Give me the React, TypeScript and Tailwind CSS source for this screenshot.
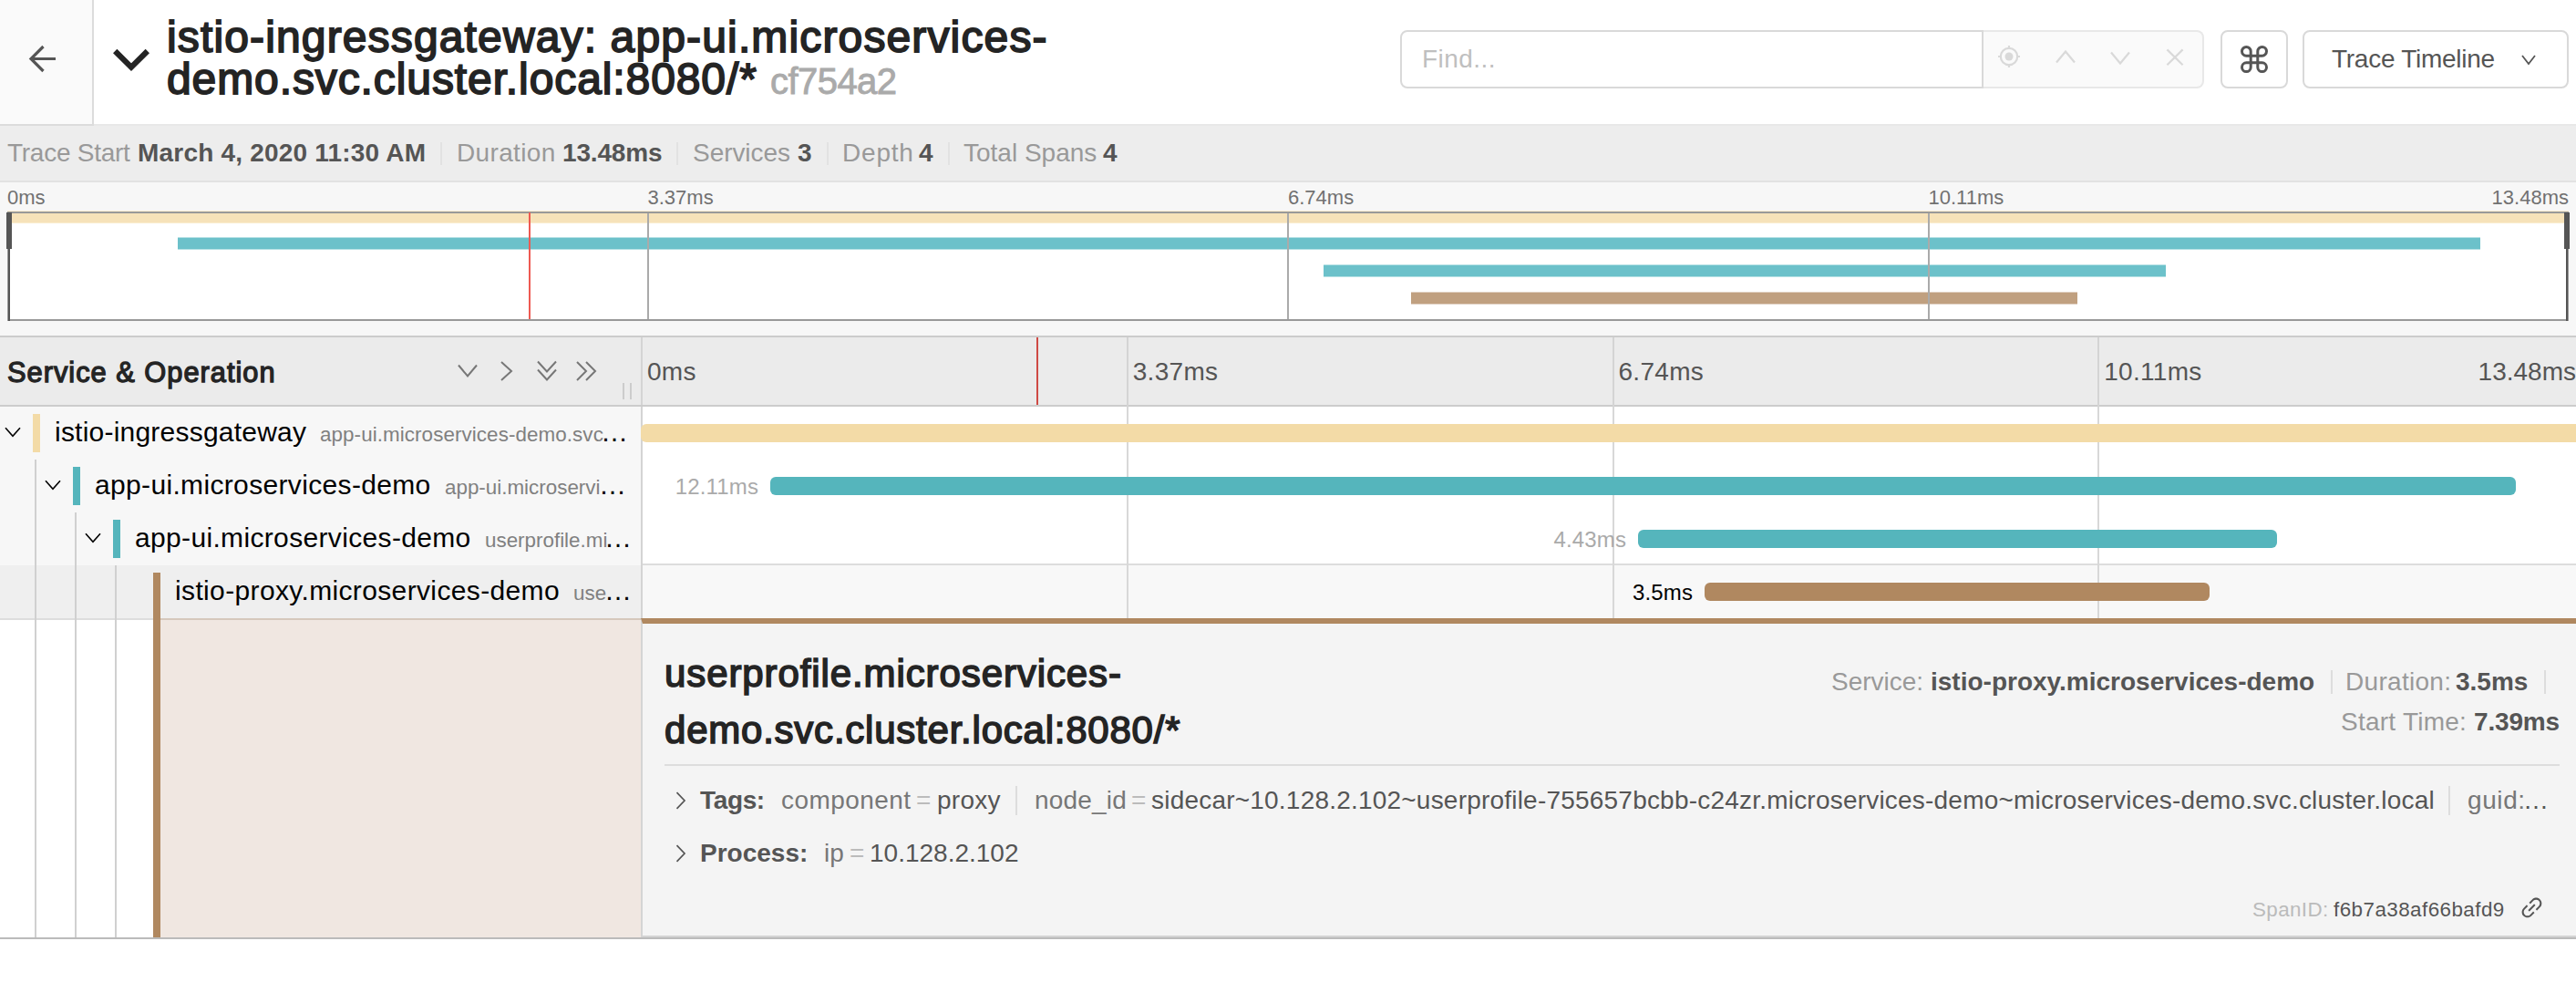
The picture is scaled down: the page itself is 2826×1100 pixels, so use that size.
import type { ReactNode } from "react";
import { AiOutlineLink } from "react-icons/ai";

const GRID = [25, 50, 75];
const TICKS = ["0ms", "3.37ms", "6.74ms", "10.11ms"];

function Stroke({ w, h, d, sw = 2, className = "" }: { w: number; h: number; d: string; sw?: number; className?: string }) {
  return (
    <svg width={w} height={h} viewBox={`0 0 ${w} ${h}`} fill="none" stroke="currentColor" strokeWidth={sw} className={`block shrink-0 ${className}`}>
      <path d={d} />
    </svg>
  );
}

function T({ className = "", children }: { className?: string; children: ReactNode }) {
  return <span className={`block shrink-0 whitespace-nowrap ${className}`}>{children}</span>;
}

function Header() {
  return (
    <header className="flex h-[138px] w-full">
      <div className="flex w-[103px] shrink-0 border-r-2 border-b-2 border-[#dcdcdc] bg-[#fafafa] pt-[49px] pl-[31px] text-[#555]">
        <Stroke w={31} h={31} sw={3.2} d="M30 15.5H3M16.5 2L3 15.5L16.5 29" />
      </div>
      <div className="flex flex-1 border-b-2 border-[#e8e8e8]">
        <Stroke w={40} h={26} sw={6.2} className="mt-[53px] ml-[21px] text-[#242424]" d="M2.2 3L20 20.6L37.8 3" />
        <h1 className="mt-[18px] ml-[19px] w-[1000px] text-[48px] leading-[46px] text-[#242424] [-webkit-text-stroke:1.8px_#242424]">
          <T className="tracking-[1.14px]">istio-ingressgateway: app-ui.microservices-</T>
          <span className="flex items-baseline">
            <T className="w-[662px] tracking-[0.9px]">demo.svc.cluster.local:8080/*</T>
            <T className="text-[40px] tracking-[-0.55px] text-[#aaa] [-webkit-text-stroke:0.9px_#aaa]">cf754a2</T>
          </span>
        </h1>
        <div className="mt-[33px] ml-auto flex h-16 pr-2">
          <div className="flex w-[640px] items-center rounded-l-lg border-2 border-[#d9d9d9] pl-[22px]">
            <T className="text-[28px] tracking-[0.45px] text-[#bfbfbf]">Find...</T>
          </div>
          <div className="flex w-[242px] items-start rounded-r-lg border-2 border-l-0 border-[#e8e8e8] bg-[#fafafa] text-[#d9d9d9]">
            <svg width="26" height="26" viewBox="0 0 26 26" className="mt-[14px] ml-[15px] block" fill="none" stroke="currentColor" strokeWidth="2.2">
              <circle cx="13" cy="13" r="9.2" />
              <circle cx="13" cy="13" r="4.5" fill="currentColor" stroke="none" />
              <path d="M13 1v3M13 22v3M1 13h3M22 13h3" />
            </svg>
            <Stroke w={22} h={16} sw={2.2} className="mt-[19px] ml-[38px]" d="M1 14.5L11 2.5L21 14.5" />
            <Stroke w={22} h={16} sw={2.2} className="mt-[21px] ml-[38px]" d="M1 1.5L11 13.5L21 1.5" />
            <Stroke w={20} h={20} sw={2.2} className="mt-[18px] ml-[39px]" d="M1.4 1.4L18.6 18.2M18.6 1.4L1.4 18.2" />
          </div>
          <div className="ml-[18px] w-[74px] rounded-lg border-2 border-[#d9d9d9] pt-[15px] pl-5 text-[#555]">
            <Stroke w={30} h={30} sw={3} d="M18.8 6.35v17.3a4.85 4.85 0 1 0 4.85-4.85H6.35a4.85 4.85 0 1 0 4.85 4.85V6.35a4.85 4.85 0 1 0-4.85 4.85h17.3a4.85 4.85 0 1 0-4.85-4.85" />
          </div>
          <div className="ml-4 flex w-[292px] items-center rounded-lg border-2 border-[#d9d9d9] pl-[30px] text-[#555]">
            <T className="w-[208px] text-[28px] tracking-[-0.27px]">Trace Timeline</T>
            <Stroke w={16} h={12} sw={1.8} className="mt-px" d="M1 1L8 10L15 1" />
          </div>
        </div>
      </div>
    </header>
  );
}

function Divider() {
  return <div className="h-[25px] w-[2px] shrink-0 bg-[#e2e2e2]" />;
}

function Summary() {
  return (
    <div className="flex h-[62px] items-center border-b-2 border-[#e2e2e2] bg-[#ededed] pl-2 text-[28px] leading-[60px] text-[#999]">
      <T className="w-[143px] tracking-[-0.26px]">Trace Start</T>
      <T className="w-[332px] font-bold tracking-[0.2px] text-[#555]">March 4, 2020 11:30 AM</T>
      <Divider />
      <T className="ml-4 w-[116px] tracking-[0.35px]">Duration</T>
      <T className="w-[125px] font-bold tracking-[-0.16px] text-[#555]">13.48ms</T>
      <Divider />
      <T className="ml-4 w-[115px] tracking-[-0.05px]">Services</T>
      <T className="w-[32px] font-bold text-[#555]">3</T>
      <Divider />
      <T className="ml-[15px] w-[84px] tracking-[0.8px]">Depth</T>
      <T className="w-[32px] font-bold text-[#555]">4</T>
      <Divider />
      <T className="ml-[15px] w-[153px]">Total Spans</T>
      <T className="font-bold text-[#555]">4</T>
    </div>
  );
}

const MINI = [
  { left: 0, right: 100, top: "top-[-3px]", color: "bg-[#f6e2b9] border-[#faedd0]" },
  { left: 6.655, right: 96.55, top: "top-[26px]", color: "bg-[#6cc1ca] border-[#b4e0e4]" },
  { left: 51.39, right: 84.27, top: "top-[56px]", color: "bg-[#6cc1ca] border-[#b4e0e4]" },
  { left: 54.8, right: 80.82, top: "top-[86px]", color: "bg-[#c0a080] border-[#dfcfbf]" },
];

function Minimap() {
  return (
    <div className="h-[170px] border-b-2 border-[#ccc] bg-[#f7f7f7] px-2">
      <div className="grid h-8 grid-cols-4 text-[22px] leading-[33px] text-[#717171]">
        <T>0ms</T>
        <T>3.37ms</T>
        <T>6.74ms</T>
        <span className="flex justify-between">
          <T>10.11ms</T>
          <T>13.48ms</T>
        </span>
      </div>
      <div className="relative h-[120px] border-y-2 border-[#999] bg-white">
        {MINI.map((b, i) => (
          <div key={i} className={`absolute h-[14px] border-y ${b.top} ${b.color}`} style={{ left: `${b.left}%`, width: `${b.right - b.left}%` }} />
        ))}
        <div className="absolute inset-x-0 -top-[2px] h-[2px] bg-[#999]" />
        {GRID.map((g) => (
          <div key={g} className="absolute inset-y-0 -ml-px w-[2px] bg-[#aaa]" style={{ left: `${g}%` }} />
        ))}
        <div className="absolute top-0 -bottom-[2px] left-0 w-[3px] border-l border-[#999] bg-[#555]" />
        <div className="absolute top-0 -bottom-[2px] right-0 w-[3px] border-r border-[#999] bg-[#555]" />
        <div className="absolute -top-px -left-px h-10 w-[6px] bg-[#555]" />
        <div className="absolute -top-px -right-px h-10 w-[6px] bg-[#555]" />
        <div className="absolute -top-px bottom-0 left-[572px] w-[2px] bg-[#ee5a52]" />
      </div>
    </div>
  );
}

function TimelineHeader() {
  return (
    <div className="flex h-[76px] border-b-2 border-[#ccc] bg-[#ebebeb]">
      <div className="relative flex w-[705px] shrink-0 items-center border-r-2 border-[#d4d4d4] pl-2 text-[#777]">
        <T className="w-[494px] pt-[4px] text-[30.8px] leading-[72px] tracking-[1px] text-[#242424] [-webkit-text-stroke:1.3px_#242424]">Service &amp; Operation</T>
        <Stroke w={22} h={16} className="-mt-px" d="M1 1.5L11 13.5L21 1.5" />
        <Stroke w={16} h={22} className="ml-6" d="M2 1L13 11L2 21" />
        <Stroke w={22} h={24} className="ml-[25px]" d="M1 1.5L11 12.5L21 1.5M1 10.5L11 21.5L21 10.5" />
        <Stroke w={24} h={22} className="ml-5" d="M2 1L12 11L2 21M12 1L22 11L12 21" />
        <div className="absolute right-[10px] bottom-[6px] h-[18px] w-[10px] border-x-2 border-[#ccc]" />
      </div>
      <div className="relative -ml-[2px] grid w-[2131px] shrink-0 grid-cols-4 text-[28px] leading-[76px] text-[#555]">
        {TICKS.map((t, i) => (
          <div key={t} className={`flex justify-between pr-2 ${i === 0 ? "pl-[7px]" : "border-l-2 border-[#d4d4d4] pl-[5px]"}`}>
            <T className="tracking-[0.3px]">{t}</T>
            {i === 3 && <T>13.48ms</T>}
          </div>
        ))}
        <div className="absolute inset-y-0 left-[434px] w-[2px] bg-[#cf4a44]" />
      </div>
    </div>
  );
}

type Row = {
  name: string; op: string; label?: string; left: number; right: number;
  color: string; lines: number; nameBox: string; opBox: string; selected?: boolean;
};

const ROWS: Row[] = [
  { name: "istio-ingressgateway", op: "app-ui.microservices-demo.svc", left: 0, right: 100, color: "bg-[#f3dba7]", lines: 0, nameBox: "w-[291px] tracking-[0.22px]", opBox: "w-[308px] tracking-[0.08px]" },
  { name: "app-ui.microservices-demo", op: "app-ui.microservi", label: "12.11ms", left: 6.67, right: 96.52, color: "bg-[#55b5bc]", lines: 1, nameBox: "w-[384px] tracking-[0.34px]", opBox: "w-[169px]" },
  { name: "app-ui.microservices-demo", op: "userprofile.mi", label: "4.43ms", left: 51.34, right: 84.24, color: "bg-[#55b5bc]", lines: 2, nameBox: "w-[384px] tracking-[0.34px]", opBox: "w-[131px]" },
  { name: "istio-proxy.microservices-demo", op: "use", label: "3.5ms", left: 54.77, right: 80.76, color: "bg-[#b08860]", lines: 3, nameBox: "w-[437px] tracking-[0.36px]", opBox: "w-[34px]", selected: true },
];

function Indent({ n }: { n: number }) {
  return (
    <>
      {Array.from({ length: n }, (_, i) => (
        <div key={i} className="flex w-11 shrink-0 justify-end self-stretch">
          <div className="mr-1 w-[2px] bg-[#d0d0d0]" />
        </div>
      ))}
    </>
  );
}

function SpanRow({ row, last }: { row: Row; last: boolean }) {
  const sel = row.selected;
  return (
    <div className="flex h-[58px]">
      <div className={`flex w-[705px] shrink-0 items-center border-r-2 border-[#d4d4d4] ${sel ? "bg-[#efefef]" : "bg-[#f7f7f7]"}`}>
        <Indent n={row.lines} />
        <div className="flex w-9 shrink-0 pl-[5px]">
          {!sel && <Stroke w={18} h={12} sw={1.6} className="-mt-[3px] text-black" d="M1 1.2L9 10.2L17 1.2" />}
        </div>
        <div className={`w-2 shrink-0 ${sel ? "mt-2 h-[50px]" : "h-[42px]"} ${row.color}`} />
        <div className="ml-4 flex items-baseline text-[30px] leading-[54px] text-black">
          <T className={`-mt-1 ${row.nameBox}`}>{row.name}</T>
          <T className={`text-[22.4px] text-[#808080] ${row.opBox}`}>{row.op}</T>
          <T>…</T>
        </div>
      </div>
      <div className="relative -ml-[2px] w-[2131px] shrink-0">
        <div className={`absolute inset-y-0 right-0 left-[2px] ${sel ? "bg-[#f8f8f8]" : "bg-white"} ${last ? "border-b-2 border-[#ddd]" : ""}`} />
        <div className="relative h-full">
          {GRID.map((g) => (
            <div key={g} className="absolute inset-y-0 w-[2px] bg-[#d8d8d8]" style={{ left: `${g}%` }} />
          ))}
          <div className="relative flex h-full items-center" style={{ marginLeft: `${row.left}%`, width: `${row.right - row.left}%` }}>
            {row.label && (
              <T className={`absolute right-full mr-[13px] pt-[2px] text-[24px] tracking-[0.15px] ${sel ? "text-black" : "text-[#aaa]"}`}>{row.label}</T>
            )}
            <div className={`h-5 w-full rounded-md ${row.color}`} />
          </div>
        </div>
      </div>
    </div>
  );
}

function Bar({ className }: { className: string }) {
  return <div className={`w-[2px] shrink-0 bg-[#ddd] ${className}`} />;
}

function Detail() {
  return (
    <div className="flex h-[352px] border-b-2 border-[#bbb]">
      <div className="flex w-[168px] shrink-0 border-t-2 border-[#ddd]">
        <div className="-mt-[2px] flex">
          <Indent n={3} />
        </div>
      </div>
      <div className="w-2 shrink-0 bg-[#b08860]" />
      <div className="w-[527px] shrink-0 border-t-2 border-[#d6c8bc] bg-[#f0e7e1]" />
      <div className="flex min-w-0 flex-1 flex-col border-t-[6px] border-b-2 border-l-2 border-t-[#b08860] border-b-[#d3d3d3] border-l-[#d4d4d4] bg-[#f4f4f4] pl-6 text-[28px] text-[#555]">
        <div className="mr-[18px] flex h-[156px] justify-between border-b-2 border-[#ddd]">
          <h2 className="mt-6 text-[42px] leading-[62px] text-[#242424] [-webkit-text-stroke:1.6px_#242424]">
            <T className="tracking-[0.9px]">userprofile.microservices-</T>
            <T className="tracking-[0.77px]">demo.svc.cluster.local:8080/*</T>
          </h2>
          <div className="mt-[42px] leading-[44px] text-[#999]">
            <div className="flex items-center">
              <T className="w-[109px]">Service:</T>
              <T className="w-[439px] font-bold text-[#555]">istio-proxy.microservices-demo</T>
              <Bar className="h-[26px]" />
              <T className="ml-[14px] w-[121px] tracking-[0.3px]">Duration:</T>
              <T className="w-[97px] font-bold text-[#555]">3.5ms</T>
              <Bar className="mr-[15px] h-[26px]" />
            </div>
            <div className="flex justify-end">
              <T className="w-[146px] tracking-[0.24px]">Start Time:</T>
              <T className="font-bold tracking-[-0.17px] text-[#555]">7.39ms</T>
            </div>
          </div>
        </div>
        <div className="mt-[9px] flex h-[58px] items-center">
          <Stroke w={12} h={20} sw={1.7} className="mr-[15px] ml-3" d="M1.5 1.2L10 10L1.5 18.8" />
          <T className="w-[89px] font-bold tracking-[-0.35px]">Tags:</T>
          <T className="w-[148px] tracking-[0.45px] text-[#777]">component</T>
          <T className="w-[23px] text-[#bbb]">=</T>
          <T className="w-[86px] tracking-[0.25px]">proxy</T>
          <Bar className="h-8" />
          <T className="ml-[19px] w-[106px] tracking-[0.2px] text-[#777]">node_id</T>
          <T className="w-[22px] text-[#bbb]">=</T>
          <T className="w-[1423px] tracking-[0.21px]">sidecar~10.128.2.102~userprofile-755657bcbb-c24zr.microservices-demo~microservices-demo.svc.cluster.local</T>
          <Bar className="h-8" />
          <T className="ml-[19px] w-[61px] tracking-[0.6px] text-[#777]">guid:</T>
          <T>…</T>
        </div>
        <div className="flex h-[58px] items-center">
          <Stroke w={12} h={20} sw={1.7} className="mr-[15px] ml-3" d="M1.5 1.2L10 10L1.5 18.8" />
          <T className="w-[136px] font-bold">Process:</T>
          <T className="w-[28px] text-[#777]">ip</T>
          <T className="w-[22px] text-[#bbb]">=</T>
          <T>10.128.2.102</T>
        </div>
        <div className="mr-[34px] flex flex-1 items-center justify-end text-[22.4px]">
          <T className="w-[89px] pt-[5px] tracking-[0.38px] text-[#bbb]">SpanID:</T>
          <T className="w-[203px] pt-[5px] tracking-[0.45px]">f6b7a38af66bafd9</T>
          <AiOutlineLink size={29} className="shrink-0" />
        </div>
      </div>
    </div>
  );
}

export default function App() {
  return (
    <div className="h-[1100px] w-full overflow-hidden bg-white font-['Liberation_Sans',Arial,sans-serif]">
      <Header />
      <Summary />
      <Minimap />
      <TimelineHeader />
      {ROWS.map((r, i) => (
        <SpanRow key={i} row={r} last={i === 2} />
      ))}
      <Detail />
    </div>
  );
}
